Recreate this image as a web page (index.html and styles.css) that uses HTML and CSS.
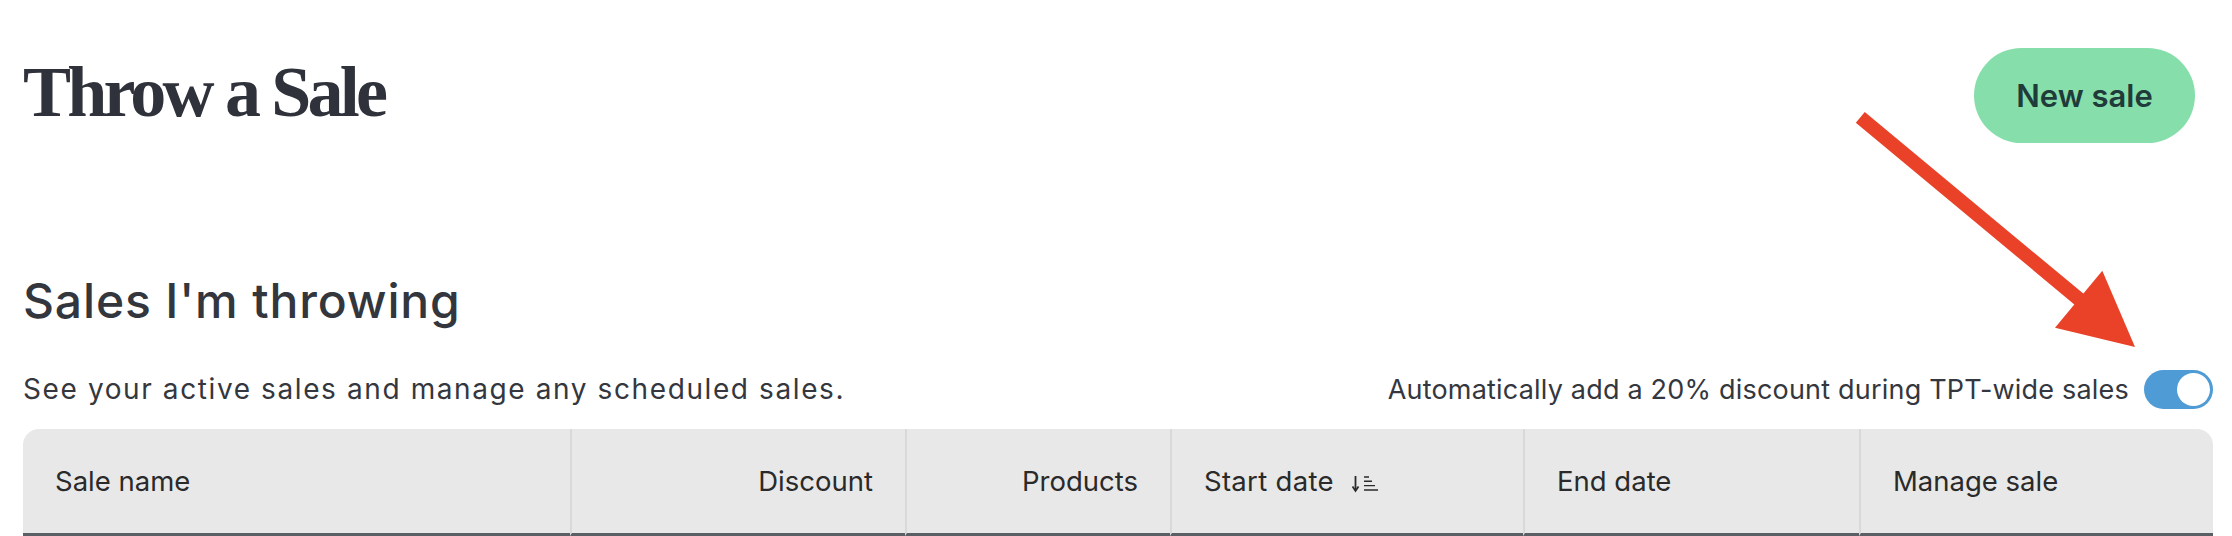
FILE: index.html
```html
<!DOCTYPE html>
<html lang="en">
<head>
<meta charset="utf-8">
<title>Throw a Sale</title>
<link rel="stylesheet" href="styles.css">
</head>
<body>
<main class="page">
  <header class="page-head">
    <h1 class="page-title">Throw a Sale</h1>
    <button class="btn-new" type="button">New sale</button>
  </header>

  <section class="sales">
    <h2 class="sales-title">Sales I'm throwing</h2>
    <div class="sales-bar">
      <p class="sales-desc">See your active sales and manage any scheduled sales.</p>
      <label class="auto-toggle">
        <span class="auto-text">Automatically add a 20% discount during TPT-wide sales</span>
        <span class="switch"><span class="knob"></span></span>
      </label>
    </div>

    <table class="sales-table">
      <colgroup>
        <col class="c-name"><col class="c-disc"><col class="c-prod"><col class="c-start"><col class="c-end"><col class="c-manage">
      </colgroup>
      <thead>
        <tr>
          <th class="th-left">Sale name</th>
          <th class="th-right">Discount</th>
          <th class="th-right">Products</th>
          <th class="th-left th-sorted">Start date<svg class="sort-icon" width="27" height="18" viewBox="0 0 27 18" aria-hidden="true">
              <path d="M3.5 1 V15" stroke="#2a2a2a" stroke-width="1.8" fill="none"/>
              <path d="M0.5 11.5 L3.5 16 L6.5 11.5" stroke="#2a2a2a" stroke-width="1.8" fill="none"/>
              <path d="M12 2 H17 M12 6.3 H20 M12 10.6 H23 M12 15 H26" stroke="#2a2a2a" stroke-width="1.4" fill="none"/>
            </svg></th>
          <th class="th-left">End date</th>
          <th class="th-left">Manage sale</th>
        </tr>
      </thead>
    </table>
  </section>

  <svg class="annot-arrow" width="2232" height="536" viewBox="0 0 2232 536" aria-hidden="true">
    <line x1="1860.3" y1="117.3" x2="2080" y2="300" stroke="#E94228" stroke-width="14"/>
    <polygon points="2135,347 2102.3,270.7 2055,327.7" fill="#E94228"/>
  </svg>
</main>
</body>
</html>
```

FILE: styles.css
```css
* { box-sizing: border-box; }

html, body {
  margin: 0;
  padding: 0;
  background: #ffffff;
}

body {
  font-family: "Inter", "Liberation Sans", sans-serif;
  color: #33363d;
}

.page {
  position: relative;
  padding: 48px 19px 0 23px;
  width: 2232px;
  height: 536px;
  overflow: hidden;
}

.page-head {
  display: flex;
  justify-content: space-between;
  align-items: flex-start;
}

.page-title {
  margin: 8px 0 0 0;
  font-family: "Liberation Serif", "Times New Roman", serif;
  font-weight: 700;
  font-size: 72px;
  line-height: 72px;
  letter-spacing: -3.8px;
  color: #2f323a;
}

.btn-new {
  margin: 0 18px 0 0;
  width: 221px;
  height: 95px;
  border: none;
  border-radius: 48px;
  background: #86dfab;
  color: #1f3b3a;
  font-family: "Inter", "Liberation Sans", sans-serif;
  font-weight: 600;
  font-size: 31px;
  padding: 0;
}

.sales {
  margin-top: 130px;
}

.sales-title {
  margin: 0;
  font-weight: 500;
  font-size: 48px;
  line-height: 56px;
  color: #33363d;
  letter-spacing: 0.85px;
}

.sales-bar {
  margin-top: 41px;
  display: flex;
  justify-content: space-between;
  align-items: center;
  height: 39px;
}

.sales-desc {
  margin: 0;
  font-size: 28px;
  line-height: 39px;
  letter-spacing: 1.6px;
  color: #34373e;
}

.auto-toggle {
  display: flex;
  align-items: center;
  gap: 15px;
}

.auto-text {
  font-size: 27px;
  line-height: 39px;
  letter-spacing: 0.2px;
  color: #34373e;
}

.switch {
  display: flex;
  justify-content: flex-end;
  align-items: center;
  width: 69px;
  height: 39px;
  padding: 3px;
  border-radius: 20px;
  background: #4f9bd6;
}

.knob {
  width: 33px;
  height: 33px;
  border-radius: 50%;
  background: #ffffff;
}

.sales-table {
  margin-top: 20px;
  width: 2190px;
  border-collapse: separate;
  border-spacing: 0;
  table-layout: fixed;
}

.c-name { width: 547px; }
.c-disc { width: 335px; }
.c-prod { width: 265px; }
.c-start { width: 353px; }
.c-end { width: 336px; }
.c-manage { width: 354px; }

.sales-table th {
  height: 107px;
  padding: 0 32px;
  background: #e8e8e8;
  border-bottom: 3px solid #5a5f65;
  border-left: 2px solid #d9d9d9;
  font-size: 27.5px;
  font-weight: 400;
  color: #2a2a2a;
  vertical-align: middle;
  white-space: nowrap;
}

.sales-table th:first-child {
  border-left: none;
  border-top-left-radius: 16px;
}

.sales-table th:last-child {
  border-top-right-radius: 16px;
}

.th-left { text-align: left; }
.th-right { text-align: right; }

.th-sorted {
  font-weight: 600;
  letter-spacing: 0.3px;
}

.sort-icon {
  vertical-align: -2px;
  margin-left: 18px;
}

.annot-arrow {
  position: absolute;
  left: 0;
  top: 0;
  pointer-events: none;
}
```
